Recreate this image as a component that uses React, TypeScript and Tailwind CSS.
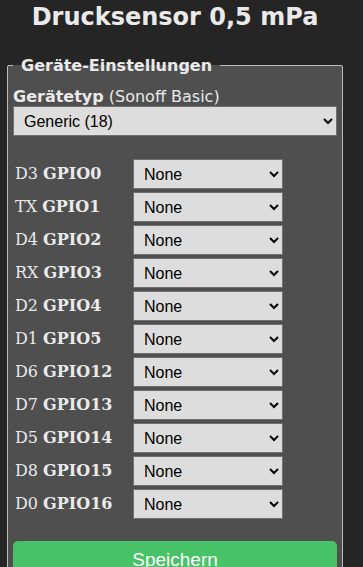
import React from 'react';

const pins = [
  ['D3', 'GPIO0'],
  ['TX', 'GPIO1'],
  ['D4', 'GPIO2'],
  ['RX', 'GPIO3'],
  ['D2', 'GPIO4'],
  ['D1', 'GPIO5'],
  ['D6', 'GPIO12'],
  ['D7', 'GPIO13'],
  ['D5', 'GPIO14'],
  ['D8', 'GPIO15'],
  ['D0', 'GPIO16'],
];

export default function App() {
  return (
    <div className="min-h-screen w-[363px] bg-[#252525] text-[#eaeaea] font-['DejaVu_Sans',sans-serif] overflow-hidden">
      <div className="ml-[7px] w-[336px]">
        <h2 className="pt-[3px] text-center text-[24px] font-bold leading-[28px]">Drucksensor 0,5 mPa</h2>

        <fieldset className="mt-[25px] w-full border border-[#bdbdbd] rounded-[2px] bg-[#4f4f4f] px-[5px] pb-[8px]">
          <legend className="px-[8px] text-[16px] font-bold leading-[19px]">Geräte-Einstellungen</legend>

          <p className="mt-[12px] text-[16px] leading-[19px]">
            <b>Gerätetyp</b> (Sonoff Basic)
          </p>
          <select className="block h-[30px] w-full border border-[#707070] bg-[#dddddd] pl-[6px] text-[16px] text-black font-['Liberation_Sans',sans-serif]">
            <option>Generic (18)</option>
          </select>

          <div className="mt-[23px] flex flex-col gap-[3px]">
            {pins.map(([d, g]) => (
              <div key={g} className="flex items-center h-[30px]">
                <span className="w-[120px] pl-[2px] text-[16px] font-['DejaVu_Serif',serif]">
                  {d} <b>{g}</b>
                </span>
                <select className="h-[30px] w-[150px] border border-[#707070] bg-[#dddddd] pl-[6px] text-[16px] text-black font-['Liberation_Sans',sans-serif]">
                  <option>None</option>
                </select>
              </div>
            ))}
          </div>

          <button className="mt-[22px] block h-[38px] w-full rounded-[5px] bg-[#47c266] text-[19px] leading-[38px] text-white font-['Liberation_Sans',sans-serif]">
            Speichern
          </button>
        </fieldset>
      </div>
    </div>
  );
}
